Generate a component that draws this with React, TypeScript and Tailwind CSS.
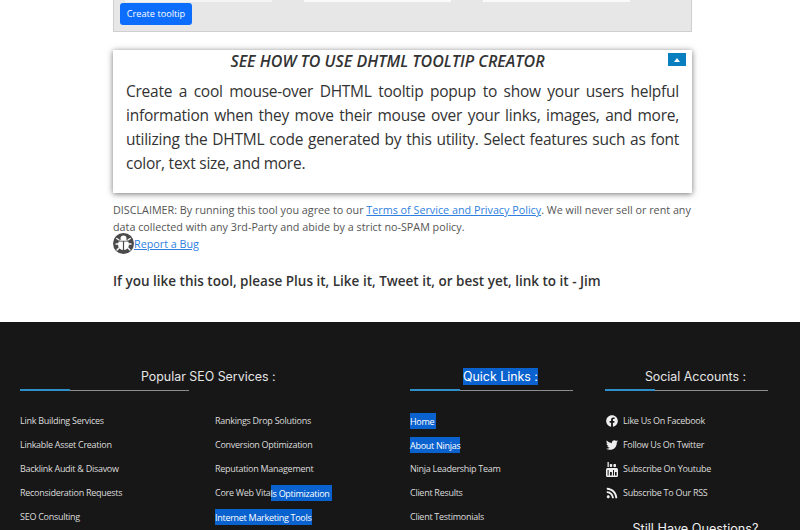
import { FaFacebook, FaTwitter, FaRss } from 'react-icons/fa';
import type { ReactNode } from 'react';

const sel = 'bg-[#0a62cf] text-white';

function Heading({ children, className = '' }: { children: ReactNode; className?: string }) {
  return (
    <div className={`relative h-[29px] whitespace-nowrap border-b border-[#8d8d8d] pl-[18px] text-center text-[12.4px] leading-[30px] text-[#e6e6e6] font-['Inter',sans-serif] ${className}`}>
      {children}
      <div className="absolute left-0 bottom-[-1px] h-[2px] w-[50px] bg-[#2f8fc9]" />
    </div>
  );
}

function LinkRow({ children }: { children: ReactNode }) {
  return <div className="h-6 leading-6 whitespace-nowrap">{children}</div>;
}

function YoutubeIcon() {
  return (
    <svg width="12" height="15" viewBox="0 0 12 15" fill="#eee">
      <rect x="0" y="6" width="12" height="9" rx="1.5" />
      <rect x="1.5" y="0" width="1.3" height="5" />
      <rect x="3.8" y="2" width="2.4" height="3" rx="0.8" />
      <rect x="7.4" y="2" width="2.6" height="3" rx="0.8" />
      <rect x="1.6" y="8" width="1" height="5.5" fill="#171717" />
      <rect x="4" y="10" width="1.8" height="3.5" fill="#171717" />
      <rect x="7" y="8" width="1" height="5.5" fill="#171717" />
      <rect x="9" y="10" width="1.6" height="3.5" fill="#171717" />
    </svg>
  );
}

function BugIcon() {
  return (
    <svg width="21" height="21" viewBox="0 0 21 21">
      <circle cx="10.5" cy="10.5" r="10.5" fill="#4a4a4a" />
      <g stroke="#fff" strokeWidth="1.4" strokeLinecap="round">
        <path d="M6 7 L3.8 5.5" />
        <path d="M15 7 L17.2 5.5" />
        <path d="M5 11 L3 11" />
        <path d="M16 11 L18 11" />
        <path d="M6 15 L4 17" />
        <path d="M15 15 L17 17" />
      </g>
      <circle cx="10.5" cy="5.5" r="3" fill="#fff" />
      <ellipse cx="10.5" cy="11.5" rx="5.5" ry="5.5" fill="#fff" />
      <path d="M10.5 8 V17" stroke="#4a4a4a" strokeWidth="1.2" />
      <path d="M5.5 8.2 H15.5" stroke="#4a4a4a" strokeWidth="0.8" />
    </svg>
  );
}

export default function App() {
  return (
    <div className="h-[530px] w-[800px] overflow-hidden bg-white font-['Open_Sans',sans-serif]">
      <div className="ml-[113px] mr-[108px]">
        {/* tool form */}
        <div className="h-[32px] border-x border-b border-[#cfcfcf] bg-[#e7e7e7]">
          <div className="ml-[11px] flex h-[2px] gap-[32px]">
            <div className="w-[147px] bg-[#f4f4f4]" />
            <div className="w-[147px] bg-[#fafafa]" />
            <div className="w-[147px] bg-[#fafafa]" />
          </div>
          <button className="ml-[6px] mt-[1px] block h-[22px] w-[72px] rounded-[3px] bg-[#0d6efd] text-[9.2px] text-white">Create tooltip</button>
        </div>

        {/* info box */}
        <div className="relative mt-[18px] h-[143px] bg-white px-[13px] shadow-[0_1px_6px_rgba(0,0,0,0.55)]">
          <h2 className="pr-[30px] pt-[1px] text-center text-[16px] font-semibold italic leading-[20px] text-[#333]">SEE HOW TO USE DHTML TOOLTIP CREATOR</h2>
          <button className="absolute right-[6px] top-[3px] flex h-[13px] w-[18px] items-center justify-center bg-[#0a7fc0]">
            <span className="h-0 w-0 border-x-[3.5px] border-b-[4px] border-x-transparent border-b-white" />
          </button>
          <p className="mt-[8px] text-justify text-[15.5px] leading-[24px] tracking-[-0.25px] text-[#333]">
            Create a cool mouse-over DHTML tooltip popup to show your users helpful information when they move their mouse over your links, images, and more, utilizing the DHTML code generated by this utility. Select features such as font color, text size, and more.
          </p>
        </div>

        {/* disclaimer */}
        <p className="mt-[8px] text-[10.78px] leading-[17px] text-[#555]">
          DISCLAIMER: By running this tool you agree to our <a className="text-[#2f7fe0] underline">Terms of Service and Privacy Policy</a>. We will never sell or rent any data collected with any 3rd-Party and abide by a strict no-SPAM policy.
        </p>
        <div className="-mt-[2px] flex h-[21px] items-center text-[10.78px] leading-[17px]">
          <BugIcon />
          <a className="text-[#2f7fe0] underline">Report a Bug</a>
        </div>
        <p className="mt-[17px] whitespace-nowrap text-[13.5px] font-semibold leading-[20px] text-[#333]">If you like this tool, please Plus it, Like it, Tweet it, or best yet, link to it - Jim</p>
      </div>

      {/* footer */}
      <footer className="mt-[31px] flex h-[208px] bg-[#171717] pl-[20px] pt-[40px] text-[9px] tracking-[-0.28px] text-[#dcdcdc]">
        <div className="w-[390px]">
          <Heading className="w-[169px] tracking-normal">
            <span className="absolute left-[121px] top-0">Popular SEO Services :</span>
          </Heading>
          <div className="mt-[18px] flex">
            <div className="w-[195px]">
              <LinkRow>Link Building Services</LinkRow>
              <LinkRow>Linkable Asset Creation</LinkRow>
              <LinkRow>Backlink Audit &amp; Disavow</LinkRow>
              <LinkRow>Reconsideration Requests</LinkRow>
              <LinkRow>SEO Consulting</LinkRow>
            </div>
            <div>
              <LinkRow>Rankings Drop Solutions</LinkRow>
              <LinkRow>Conversion Optimization</LinkRow>
              <LinkRow>Reputation Management</LinkRow>
              <LinkRow>Core Web Vita<span className={`${sel} py-[1.5px] pr-[2px]`}>ls Optimization</span></LinkRow>
              <LinkRow><span className={`${sel} py-[1.5px]`}>Internet Marketing Tools</span></LinkRow>
            </div>
          </div>
        </div>
        <div className="w-[163px]">
          <Heading className="tracking-normal"><span className={`${sel} py-[1px]`}>Quick Links :</span></Heading>
          <div className="mt-[18px]">
            <LinkRow><span className={`${sel} py-[1.5px] pr-[2px]`}>Home</span></LinkRow>
            <LinkRow><span className={`${sel} py-[1.5px]`}>About Ninjas</span></LinkRow>
            <LinkRow>Ninja Leadership Team</LinkRow>
            <LinkRow>Client Results</LinkRow>
            <LinkRow>Client Testimonials</LinkRow>
          </div>
        </div>
        <div className="ml-[32px] w-[163px]">
          <Heading className="tracking-normal">Social Accounts :</Heading>
          <div className="mt-[18px]">
            <LinkRow><span className="flex items-center gap-[5px] pl-[1px]"><FaFacebook className="h-3 w-3 text-[#eee]" />Like Us On Facebook</span></LinkRow>
            <LinkRow><span className="flex items-center gap-[5px] pl-[1px]"><FaTwitter className="h-3 w-3 text-[#eee]" />Follow Us On Twitter</span></LinkRow>
            <LinkRow><span className="flex items-center gap-[5px] pl-[1px]"><YoutubeIcon />Subscribe On Youtube</span></LinkRow>
            <LinkRow><span className="flex items-center gap-[5px] pl-[1px]"><FaRss className="h-3 w-3 text-[#eee]" />Subscribe To Our RSS</span></LinkRow>
          </div>
          <div className="mt-[15px] whitespace-nowrap pl-[18px] text-center text-[12.7px] leading-[18px] tracking-normal text-[#eee] font-['Inter',sans-serif]">Still Have Questions?</div>
        </div>
      </footer>
    </div>
  );
}
